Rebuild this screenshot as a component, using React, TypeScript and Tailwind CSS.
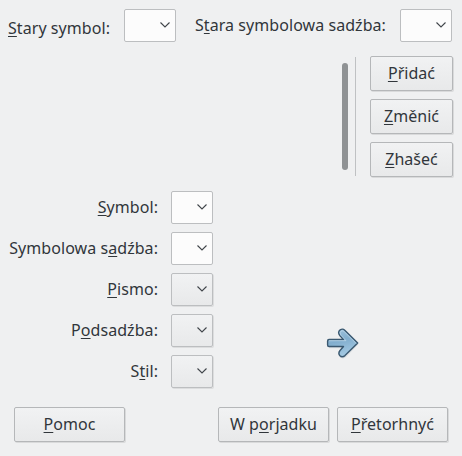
import React from "react";

function Label({ text, className = "" }: { text: string; className?: string }) {
  const [before, key, after] = text.split("|");
  return (
    <span className={`whitespace-pre ${className}`}>
      {before}
      <span className="underline decoration-1 underline-offset-2 [text-decoration-skip-ink:none]">{key}</span>
      {after}
    </span>
  );
}

function Combo({ wide = false, editable = false }: { wide?: boolean; editable?: boolean }) {
  return (
    <div
      className={`flex h-[33px] shrink-0 items-center justify-end rounded-[2px] border border-[#bcbec0] pr-[5px] pb-[2px] ${
        wide ? "w-[52px]" : "w-[42px]"
      } ${editable ? "bg-[#fcfcfc]" : "bg-linear-to-b from-[#f1f2f3] to-[#e8e9ea] shadow-[1px_1px_0_#dcddde]"}`}
    >
      <svg width="10" height="6" viewBox="0 0 10 6" fill="none" stroke="#40454a" strokeWidth="1.1">
        <path d="M0.5 0.5L5 5L9.5 0.5" />
      </svg>
    </div>
  );
}

function Button({ text, className }: { text: string; className: string }) {
  return (
    <button
      className={`flex h-[35px] shrink-0 items-center justify-center rounded-[2px] border border-[#b5b7b9] bg-linear-to-b from-[#f1f2f3] to-[#e8e9ea] pb-[2px] shadow-[1px_1px_0_#d9dadb] tracking-[0.04px] ${className}`}
    >
      <Label text={text} />
    </button>
  );
}

const fields = [
  { text: "|S|ymbol:", editable: true },
  { text: "Symbolowa s|a|dźba:", editable: true },
  { text: "|P|ismo:", editable: false },
  { text: "P|o|dsadźba:", editable: false },
  { text: "S|t|il:", editable: false },
];

export default function App() {
  return (
    <div className="flex h-[456px] w-[462px] flex-col overflow-hidden bg-[#eff0f1] font-['Noto_Sans',sans-serif] text-[16px] leading-6 tracking-[0.06px] text-[#31363b]">
      <div className="flex h-[56px] items-start pt-[9px] pl-2">
        <Label text="|S|tary symbol:" className="w-[116px] pt-[7px]" />
        <Combo wide editable />
        <Label text="S|t|ara symbolowa sadźba:" className="ml-[19px] w-[205px] pt-1" />
        <Combo wide editable />
      </div>
      <div className="flex h-[135px] justify-end pr-[9px]">
        <div className="mt-[7px] h-[107px] w-[6px] rounded-full bg-[#8f9294]" />
        <div className="mt-px ml-[7px] h-[119px] w-px bg-[#bfc1c3]" />
        <div className="ml-[14px] flex flex-col gap-2">
          <Button text="|P|řidać" className="w-[83px]" />
          <Button text="|Z|měnić" className="w-[83px]" />
          <Button text="|Z|hašeć" className="w-[83px]" />
        </div>
      </div>
      <div className="flex h-[216px]">
        <div className="flex w-[213px] flex-col gap-2">
          {fields.map((field) => (
            <div key={field.text} className="flex items-center justify-end gap-[13px]">
              <Label text={field.text} className="pb-[2px]" />
              <Combo editable={field.editable} />
            </div>
          ))}
        </div>
        <svg className="mt-[136px] ml-[113px]" width="34" height="32" viewBox="0 0 34 32">
          <defs>
            <linearGradient id="arrow" x1="0" y1="0" x2="0.3" y2="1">
              <stop offset="0" stopColor="#a3c6df" />
              <stop offset="0.5" stopColor="#82aece" />
              <stop offset="1" stopColor="#a2c8e2" />
            </linearGradient>
          </defs>
          <path
            d="M3 20.7H16M14 30Q17 32 19.5 30L32 17"
            fill="none"
            stroke="#d4d8dc"
            strokeWidth="1"
          />
          <path
            d="M3 12.5H17.5L14 8.8Q11.2 5.2 14.2 2.8Q16.8 1.2 19 3.4L31.7 16L19 28.6Q16.2 30.8 13.9 28.7Q11.8 26.3 14 23.5L17.5 19.5H3Q1.6 19.5 1.6 18V14Q1.6 12.5 3 12.5Z"
            fill="url(#arrow)"
            stroke="#3a5870"
            strokeWidth="1.4"
            strokeLinejoin="round"
          />
          <path
            d="M3 13.7H20L14.8 8.1Q13.2 5.5 15 4.1Q16.6 3.2 18.1 4.5L29.8 16"
            fill="none"
            stroke="#bbd5e7"
            strokeWidth="0.8"
          />
        </svg>
      </div>
      <div className="flex pl-[14px]">
        <Button text="|P|omoc" className="w-[111px]" />
        <Button text="W p|o|rjadku" className="ml-[93px] w-[111px]" />
        <Button text="|P|řetorhnyć" className="ml-2 w-[111px]" />
      </div>
    </div>
  );
}
